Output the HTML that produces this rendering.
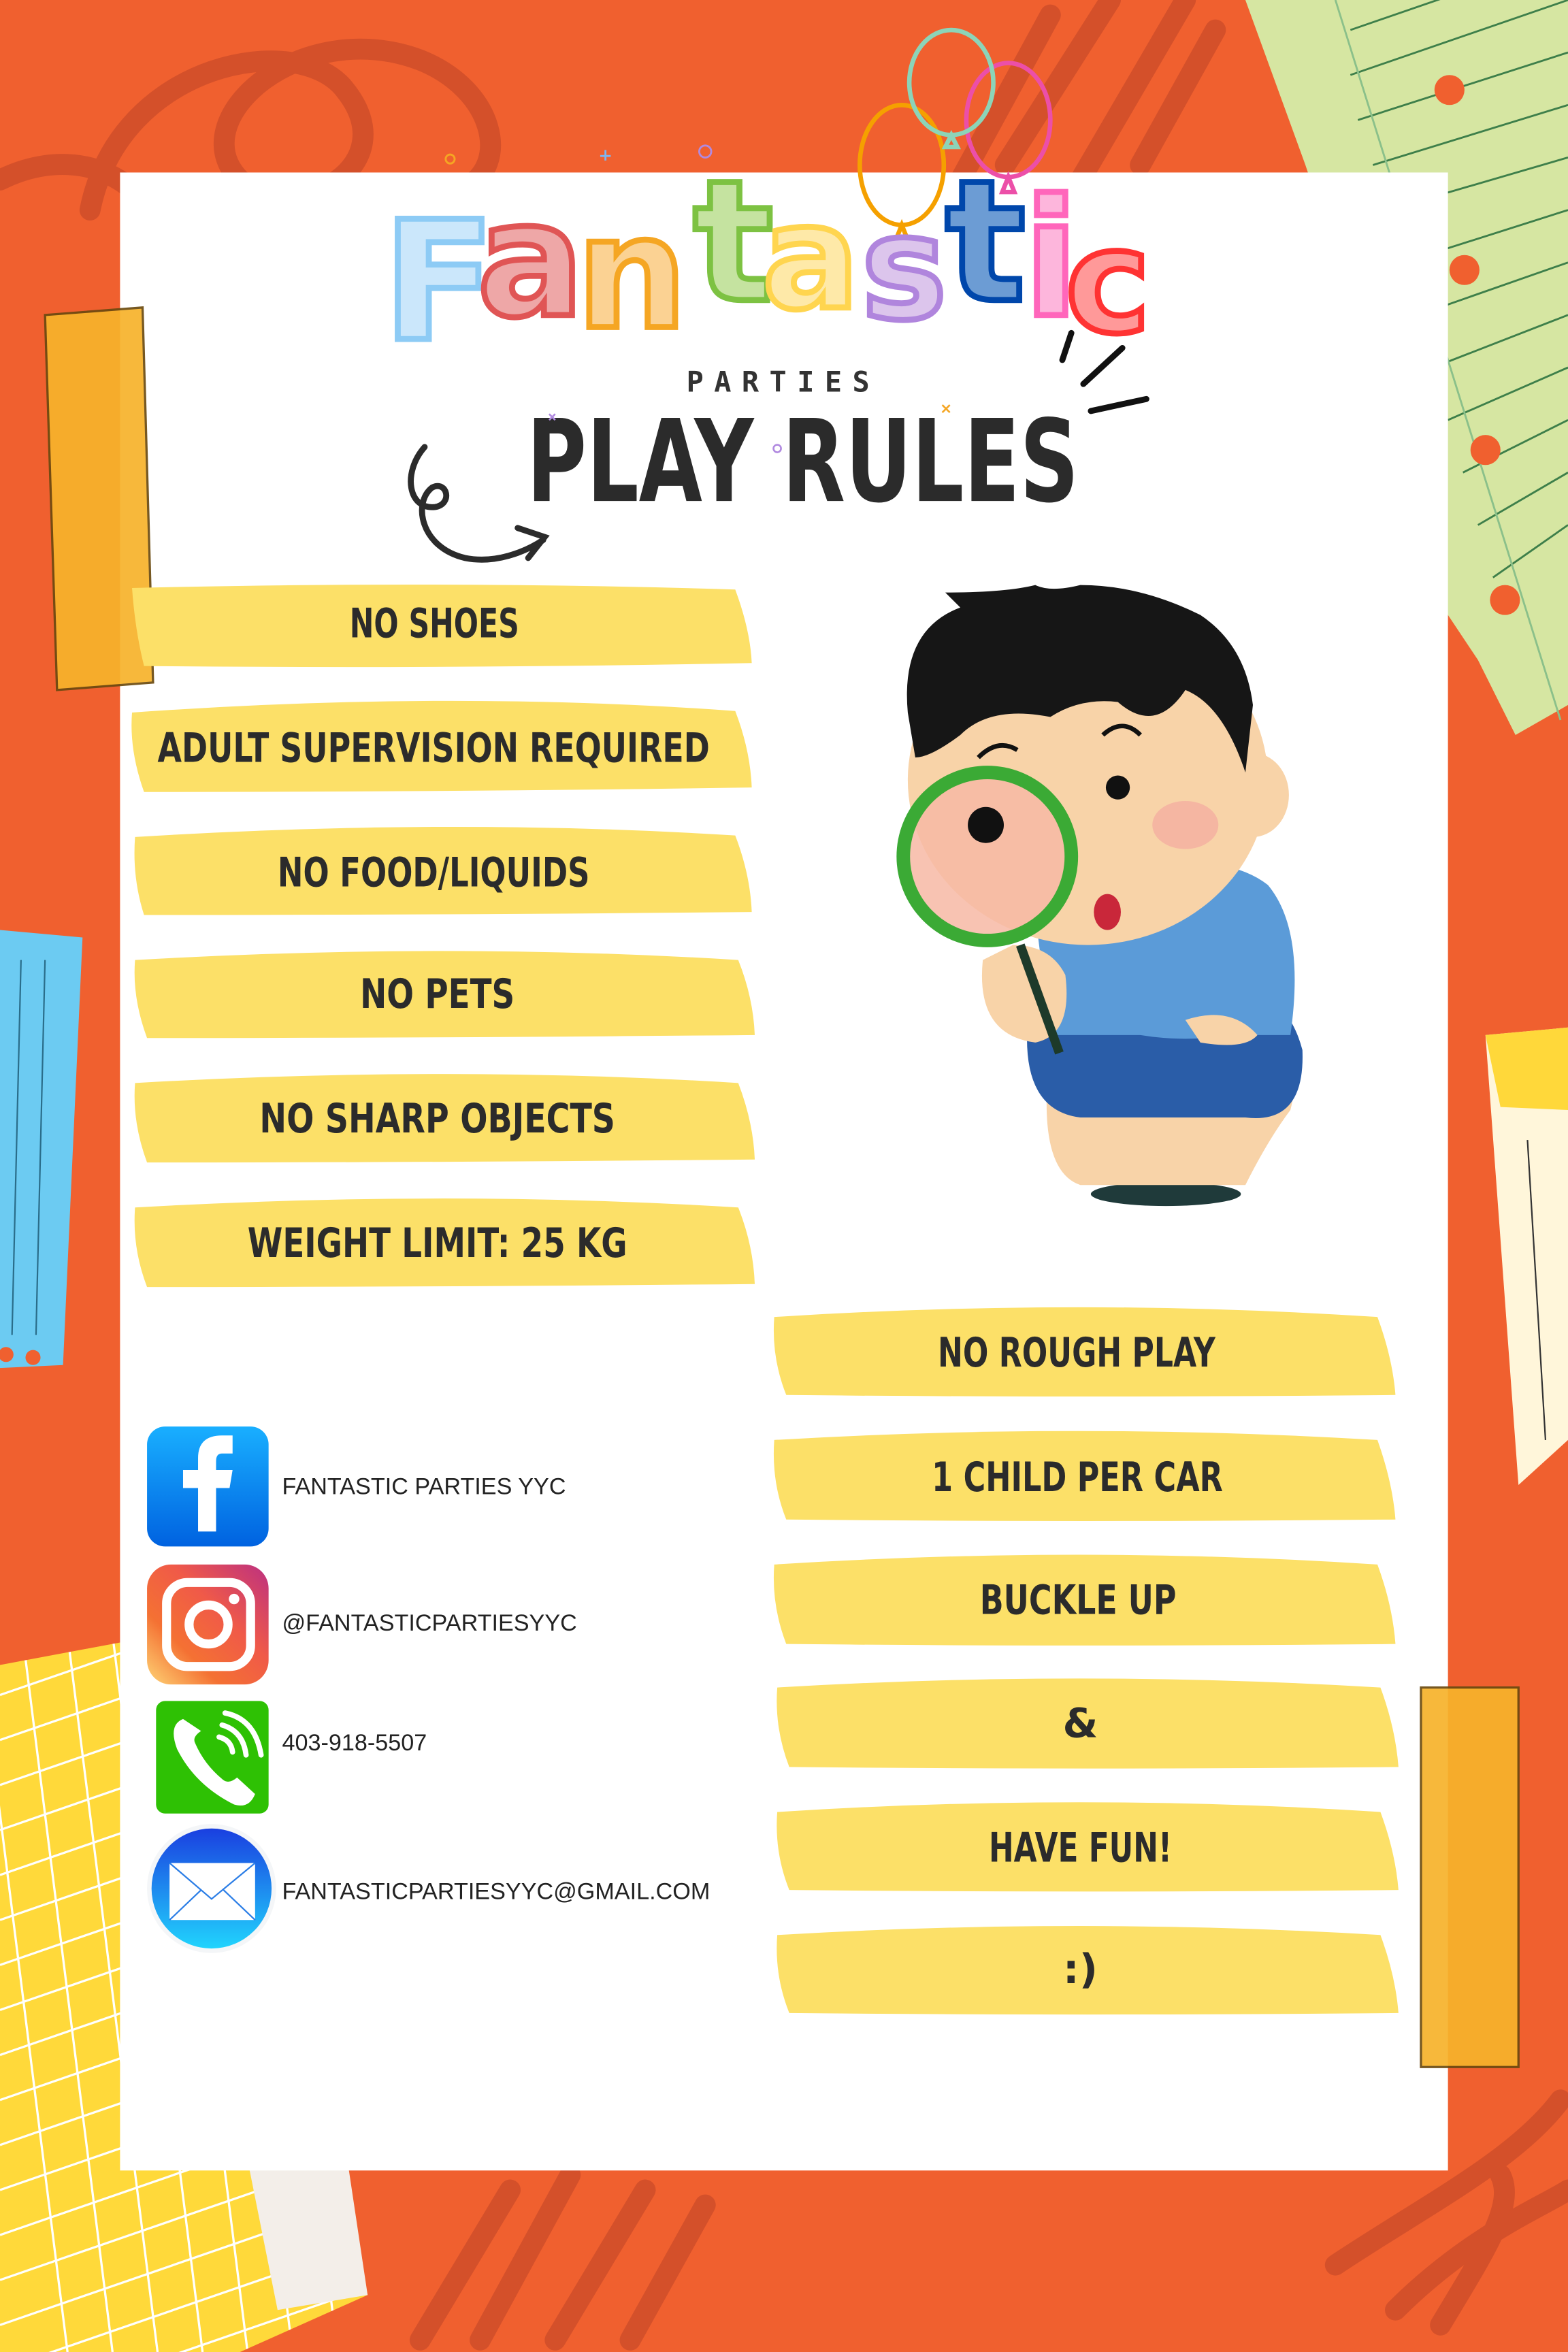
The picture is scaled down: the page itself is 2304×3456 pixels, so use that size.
<!DOCTYPE html>
<html><head><meta charset="utf-8"><style>
html,body{margin:0;padding:0;background:#F0602F;}
svg{display:block}
.b{font-family:"DejaVu Sans","Liberation Sans",sans-serif;font-weight:bold;font-size:27px;fill:#2b2b2b}
.c{font-family:"Liberation Sans",sans-serif;font-size:15.5px;fill:#222}
</style></head><body>
<svg width="2304" height="3456" viewBox="0 0 1045 1568" preserveAspectRatio="none" xmlns="http://www.w3.org/2000/svg">
<rect width="1045" height="1568" fill="#F0602F"/>
<g fill="none" stroke="#D4502A" stroke-width="14" stroke-linecap="round">
<path d="M60,140 C80,40 200,20 230,60 C270,110 200,150 160,120 C120,80 200,10 280,40 C330,60 340,110 310,125"/>
<path d="M0,120 C40,100 80,110 100,140"/>
<path d="M640,120 L700,10 M670,110 L740,0 M720,120 L790,0 M760,110 L810,20"/>
<path d="M280,1560 L340,1460 M320,1560 L380,1450 M370,1560 L430,1460 M420,1560 L470,1470"/>
<path d="M890,1510 C950,1470 1010,1440 1040,1400 M930,1540 C980,1490 1030,1470 1045,1460 M960,1550 C990,1500 1010,1470 1000,1450"/>
</g>
<path d="M830,0 L1045,0 L1045,470 L1010,490 L985,440 L965,410 L940,310 L900,200 L870,110 Z" fill="#D6E6A2"/>
<g stroke="#3E7F4A" stroke-width="1.3"><path d="M900,20 L1045,-30 M900,50 L1045,0 M905,80 L1045,35 M915,110 L1045,70 M925,140 L1045,105 M935,175 L1045,140 M945,210 L1045,175 M955,245 L1045,210 M965,280 L1045,245 M975,315 L1045,280 M985,350 L1045,315 M995,385 L1045,350"/><path d="M890,0 L1040,480" stroke="#8BC08A"/></g>
<g fill="#F0602F"><circle cx="966" cy="60" r="10"/><circle cx="976" cy="180" r="10"/><circle cx="990" cy="300" r="10"/><circle cx="1003" cy="400" r="10"/></g>
<path d="M0,620 L55,625 L42,910 L0,912 Z" fill="#6CCBF2"/><g stroke="#2a6d8a" stroke-width="1"><path d="M14,640 L8,890 M30,640 L24,890"/></g>
<g fill="#F0602F"><circle cx="4" cy="903" r="5"/><circle cx="22" cy="905" r="5"/></g>
<path d="M990,690 L1045,685 L1045,960 L1012,990 Z" fill="#FFF6DA"/><path d="M990,690 L1045,685 L1045,740 L1000,738 Z" fill="#FFD83A"/><path d="M1018,760 L1030,960" stroke="#333" stroke-width="1"/>
<g>
<path d="M0,1110 L80,1095 L245,1530 L160,1568 L0,1568 Z" fill="#FFD93A"/>
<clipPath id="gc"><path d="M0,1110 L80,1095 L245,1530 L160,1568 L0,1568 Z"/></clipPath>
<g clip-path="url(#gc)" stroke="#fff" stroke-width="1.5">
<path d="M0,1130 L260,1040 M0,1160 L260,1070 M0,1190 L260,1100 M0,1220 L260,1130 M0,1250 L260,1160 M0,1280 L260,1190 M0,1310 L260,1220 M0,1340 L260,1250 M0,1370 L260,1280 M0,1400 L260,1310 M0,1430 L260,1340 M0,1460 L260,1370 M0,1490 L260,1400 M0,1520 L260,1430 M0,1550 L260,1460 M0,1580 L260,1490 M0,1610 L260,1520 M0,1640 L260,1550"/>
<path d="M15,1090 L75,1568 M45,1090 L105,1568 M75,1090 L135,1568 M105,1090 L165,1568 M135,1090 L195,1568 M165,1090 L225,1568 M-15,1090 L45,1568"/>
</g>
<path d="M165,1440 L230,1430 L245,1530 L185,1540 Z" fill="#F3EEE9"/>
</g>
<rect x="80" y="115" width="885" height="1332" fill="#fff"/>
<!-- tapes over panel -->
<path d="M30,210 L95,205 L102,455 L38,460 Z" fill="#F7B32B" opacity="0.92" stroke="#6b4a10" stroke-width="1.5"/>
<path d="M947,1125 L1012,1125 L1012,1378 L947,1378 Z" fill="#F7B32B" opacity="0.92" stroke="#6b4a10" stroke-width="1.5"/>
<g fill="none" stroke-width="1.3"><circle cx="300" cy="106" r="3" stroke="#F5A623"/><path d="M400,104 h7 M403.5,100 v7" stroke="#7EB6F0"/><circle cx="470" cy="101" r="4" stroke="#B18AE0"/></g>
<g fill="none" stroke-width="3">
<ellipse cx="601" cy="110" rx="28" ry="40" stroke="#F5A000"/><path d="M601,150 L597,160 L605,160 Z" stroke="#F5A000"/>
<ellipse cx="672" cy="80" rx="28" ry="38" stroke="#EC4FA8"/><path d="M672,118 L668,128 L676,128 Z" stroke="#EC4FA8"/>
<ellipse cx="634" cy="55" rx="28" ry="35" stroke="#8CD4B8"/><path d="M634,90 L630,98 L638,98 Z" stroke="#8CD4B8"/>
</g>
<g font-family="DejaVu Sans,Liberation Sans,sans-serif" font-weight="bold" stroke-width="4" stroke-linejoin="miter">
<text x="255" y="226" font-size="110" fill="#CBE7FB" stroke="#8DCBF5">F</text>
<text x="318" y="210" font-size="106" fill="#EEA7A7" stroke="#E05555">a</text>
<text x="384" y="218" font-size="104" fill="#FBD293" stroke="#F5A623">n</text>
<text x="462" y="200" font-size="112" fill="#C5E3A0" stroke="#7DC242">t</text>
<text x="508" y="205" font-size="96" fill="#FEE9A8" stroke="#FFD54F">a</text>
<text x="574" y="212" font-size="96" fill="#DCC5EC" stroke="#B085DD">s</text>
<text x="630" y="200" font-size="112" fill="#6C9CD4" stroke="#0047AB">t</text>
<text x="682" y="210" font-size="108" fill="#FDB6DC" stroke="#FF66BB">i</text>
<text x="710" y="221" font-size="96" fill="#FF9999" stroke="#FF3333">c</text>
</g>
<g stroke="#111" stroke-width="4" stroke-linecap="round"><path d="M714,222 L708,240 M748,232 L722,256 M727,274 L764,266"/></g>
<text x="522" y="261" font-family="DejaVu Sans Mono,Liberation Mono,monospace" font-weight="bold" font-size="19" fill="#333" text-anchor="middle" letter-spacing="7">PARTIES</text>
<text x="351" y="334" font-family="DejaVu Sans,Liberation Sans,sans-serif" font-weight="bold" font-size="76" fill="#2b2b2b" textLength="368" lengthAdjust="spacingAndGlyphs">PLAY RULES</text>
<g fill="none" stroke="#2b2b2b" stroke-width="4" stroke-linecap="round"><path d="M283,298 C268,315 272,340 290,338 C302,336 298,320 288,325 C275,335 280,365 310,372 C330,376 350,368 362,360"/><path d="M345,352 L363,358 L352,372"/></g>
<g fill="none" stroke-width="1.2"><path d="M366,276 l4,4 m0,-4 l-4,4" stroke="#B18AE0"/><path d="M628,270 l5,5 m0,-5 l-5,5" stroke="#F5A623"/><circle cx="518" cy="299" r="2.5" stroke="#B18AE0"/></g>
<g fill="#FCE068">
<path d="M88,392 Q300,387 490,393 Q500,420 501,442 Q300,446 96,444 Q90,420 88,392Z"/>
<path d="M88,475 Q300,460 490,474 Q500,500 501,525 Q300,528 96,528 Q86,500 88,475Z"/>
<path d="M90,558 Q300,545 490,557 Q500,583 501,608 Q300,610 96,610 Q88,585 90,558Z"/>
<path d="M90,640 Q300,628 492,640 Q502,665 503,690 Q300,692 98,692 Q88,665 90,640Z"/>
<path d="M90,722 Q300,710 492,722 Q502,748 503,773 Q300,775 98,775 Q88,748 90,722Z"/>
<path d="M90,805 Q300,793 492,805 Q502,830 503,856 Q300,858 98,858 Q88,832 90,805Z"/>
</g>
<text class="b" x="233" y="425" textLength="113" lengthAdjust="spacingAndGlyphs">NO SHOES</text>
<text class="b" x="105" y="508" textLength="368" lengthAdjust="spacingAndGlyphs">ADULT SUPERVISION REQUIRED</text>
<text class="b" x="185" y="591" textLength="208" lengthAdjust="spacingAndGlyphs">NO FOOD/LIQUIDS</text>
<text class="b" x="240" y="672" textLength="103" lengthAdjust="spacingAndGlyphs">NO PETS</text>
<text class="b" x="173" y="755" textLength="237" lengthAdjust="spacingAndGlyphs">NO SHARP OBJECTS</text>
<text class="b" x="165" y="838" textLength="253" lengthAdjust="spacingAndGlyphs">WEIGHT LIMIT: 25 KG</text>
<g fill="#FCE068">
<path d="M516,878 Q720,865 918,878 Q928,905 930,930 Q720,932 524,930 Q514,905 516,878Z"/>
<path d="M516,960 Q720,948 918,960 Q928,988 930,1013 Q720,1015 524,1013 Q514,988 516,960Z"/>
<path d="M516,1043 Q720,1030 918,1043 Q928,1070 930,1096 Q720,1098 524,1096 Q514,1070 516,1043Z"/>
<path d="M518,1125 Q720,1113 920,1125 Q930,1152 932,1178 Q720,1180 526,1178 Q516,1152 518,1125Z"/>
<path d="M518,1208 Q720,1195 920,1208 Q930,1235 932,1260 Q720,1262 526,1260 Q516,1235 518,1208Z"/>
<path d="M518,1290 Q720,1278 920,1290 Q930,1317 932,1342 Q720,1344 526,1342 Q516,1317 518,1290Z"/>
</g>
<text class="b" x="625" y="911" textLength="185" lengthAdjust="spacingAndGlyphs">NO ROUGH PLAY</text>
<text class="b" x="621" y="994" textLength="194" lengthAdjust="spacingAndGlyphs">1 CHILD PER CAR</text>
<text class="b" x="653" y="1076" textLength="131" lengthAdjust="spacingAndGlyphs">BUCKLE UP</text>
<text class="b" x="720" y="1158" text-anchor="middle">&amp;</text>
<text class="b" x="659" y="1241" textLength="122" lengthAdjust="spacingAndGlyphs">HAVE FUN!</text>
<text class="b" x="720" y="1322" text-anchor="middle">:)</text>
<g>
<ellipse cx="777" cy="796" rx="50" ry="8" fill="#1f3a3a"/>
<path d="M700,700 Q690,780 720,790 L830,790 Q845,760 860,740 Q870,700 850,690 Z" fill="#F8D3A8"/>
<path d="M685,680 Q680,740 720,745 L830,745 Q870,750 868,700 Q860,670 840,665 L700,665 Z" fill="#2A5DA8"/>
<path d="M690,610 Q700,580 760,575 Q820,570 845,590 Q870,620 860,690 L820,690 Q790,695 760,690 L700,690 Z" fill="#5B9BD8"/>
<path d="M790,680 Q820,670 838,690 Q830,700 800,695 Z" fill="#F8D3A8"/>
<path d="M655,640 Q650,690 690,695 Q715,690 710,650 Q700,630 675,630 Z" fill="#F8D3A8"/>
<line x1="680" y1="630" x2="706" y2="702" stroke="#1d3a2a" stroke-width="6"/>
<ellipse cx="835" cy="530" rx="24" ry="28" fill="#F8D3A8"/>
<ellipse cx="725" cy="520" rx="120" ry="110" fill="#F8D3A8"/>
<path d="M605,475 Q600,420 640,405 L630,395 Q670,395 690,390 Q700,395 720,390 Q760,390 800,410 Q830,430 835,470 L830,515 Q815,470 790,460 Q770,490 745,468 Q720,465 700,478 Q660,470 640,490 Q620,505 610,505 Z" fill="#161616"/>
<ellipse cx="790" cy="550" rx="22" ry="16" fill="#F3A9A0" opacity="0.7"/>
<circle cx="745" cy="525" r="8" fill="#111"/>
<path d="M735,490 Q748,478 760,490" stroke="#111" stroke-width="3" fill="none"/>
<path d="M652,505 Q665,492 678,500" stroke="#111" stroke-width="3" fill="none"/>
<ellipse cx="738" cy="608" rx="9" ry="12" fill="#C9273A"/>
<circle cx="658" cy="571" r="56" fill="#F7B9A5" opacity="0.85"/>
<circle cx="658" cy="571" r="56" fill="none" stroke="#3BAA35" stroke-width="9"/>
<circle cx="657" cy="550" r="12" fill="#111"/>
</g>
<defs>
<linearGradient id="fb" x1="0" y1="0" x2="0" y2="1"><stop offset="0" stop-color="#19AFFF"/><stop offset="1" stop-color="#0062E0"/></linearGradient>
<linearGradient id="ig" x1="0" y1="1" x2="1" y2="0"><stop offset="0" stop-color="#FED576"/><stop offset="0.3" stop-color="#F47133"/><stop offset="0.6" stop-color="#F05A48"/><stop offset="1" stop-color="#BC3081"/></linearGradient>
<linearGradient id="ml" x1="0" y1="0" x2="0" y2="1"><stop offset="0" stop-color="#1A3FE0"/><stop offset="1" stop-color="#21D4FD"/></linearGradient>
</defs>
<rect x="98" y="951" width="81" height="80" rx="12" fill="url(#fb)"/>
<path d="M132,1021 L132,992 L122,992 L122,980 L132,980 L132,972 Q132,957 148,957 L155,957 L155,969 L148,969 Q144,969 144,974 L144,980 L155,980 L153,992 L144,992 L144,1021 Z" fill="#fff"/>
<text class="c" x="188" y="996">FANTASTIC PARTIES YYC</text>
<rect x="98" y="1043" width="81" height="80" rx="16" fill="url(#ig)"/>
<rect x="111" y="1055" width="56" height="56" rx="14" fill="none" stroke="#fff" stroke-width="6"/>
<circle cx="139" cy="1083" r="13" fill="none" stroke="#fff" stroke-width="6"/>
<circle cx="156" cy="1066" r="3.5" fill="#fff"/>
<text class="c" x="188" y="1087">@FANTASTICPARTIESYYC</text>
<rect x="104" y="1134" width="75" height="75" rx="6" fill="#2EC104"/>
<path d="M122,1146 Q112,1150 118,1166 Q130,1190 156,1203 Q166,1206 170,1196 L158,1185 Q152,1190 148,1186 Q136,1176 130,1162 Q128,1158 134,1154 Z" fill="#fff"/>
<g fill="none" stroke="#fff" stroke-width="3.5" stroke-linecap="round"><path d="M148,1150 Q162,1154 164,1170"/><path d="M150,1142 Q170,1146 174,1170"/><path d="M146,1158 Q154,1160 155,1168"/></g>
<text class="c" x="188" y="1167">403-918-5507</text>
<circle cx="141" cy="1259" r="43" fill="#f4f6f8"/>
<ellipse cx="141" cy="1259" rx="40" ry="40" fill="url(#ml)"/>
<rect x="113" y="1242" width="57" height="38" fill="#fff"/>
<path d="M113,1242 L141,1266 L170,1242 M113,1280 L134,1260 M170,1280 L149,1260" fill="none" stroke="#2a7de6" stroke-width="1"/>
<text class="c" x="188" y="1266">FANTASTICPARTIESYYC@GMAIL.COM</text>
</svg>
</body></html>
